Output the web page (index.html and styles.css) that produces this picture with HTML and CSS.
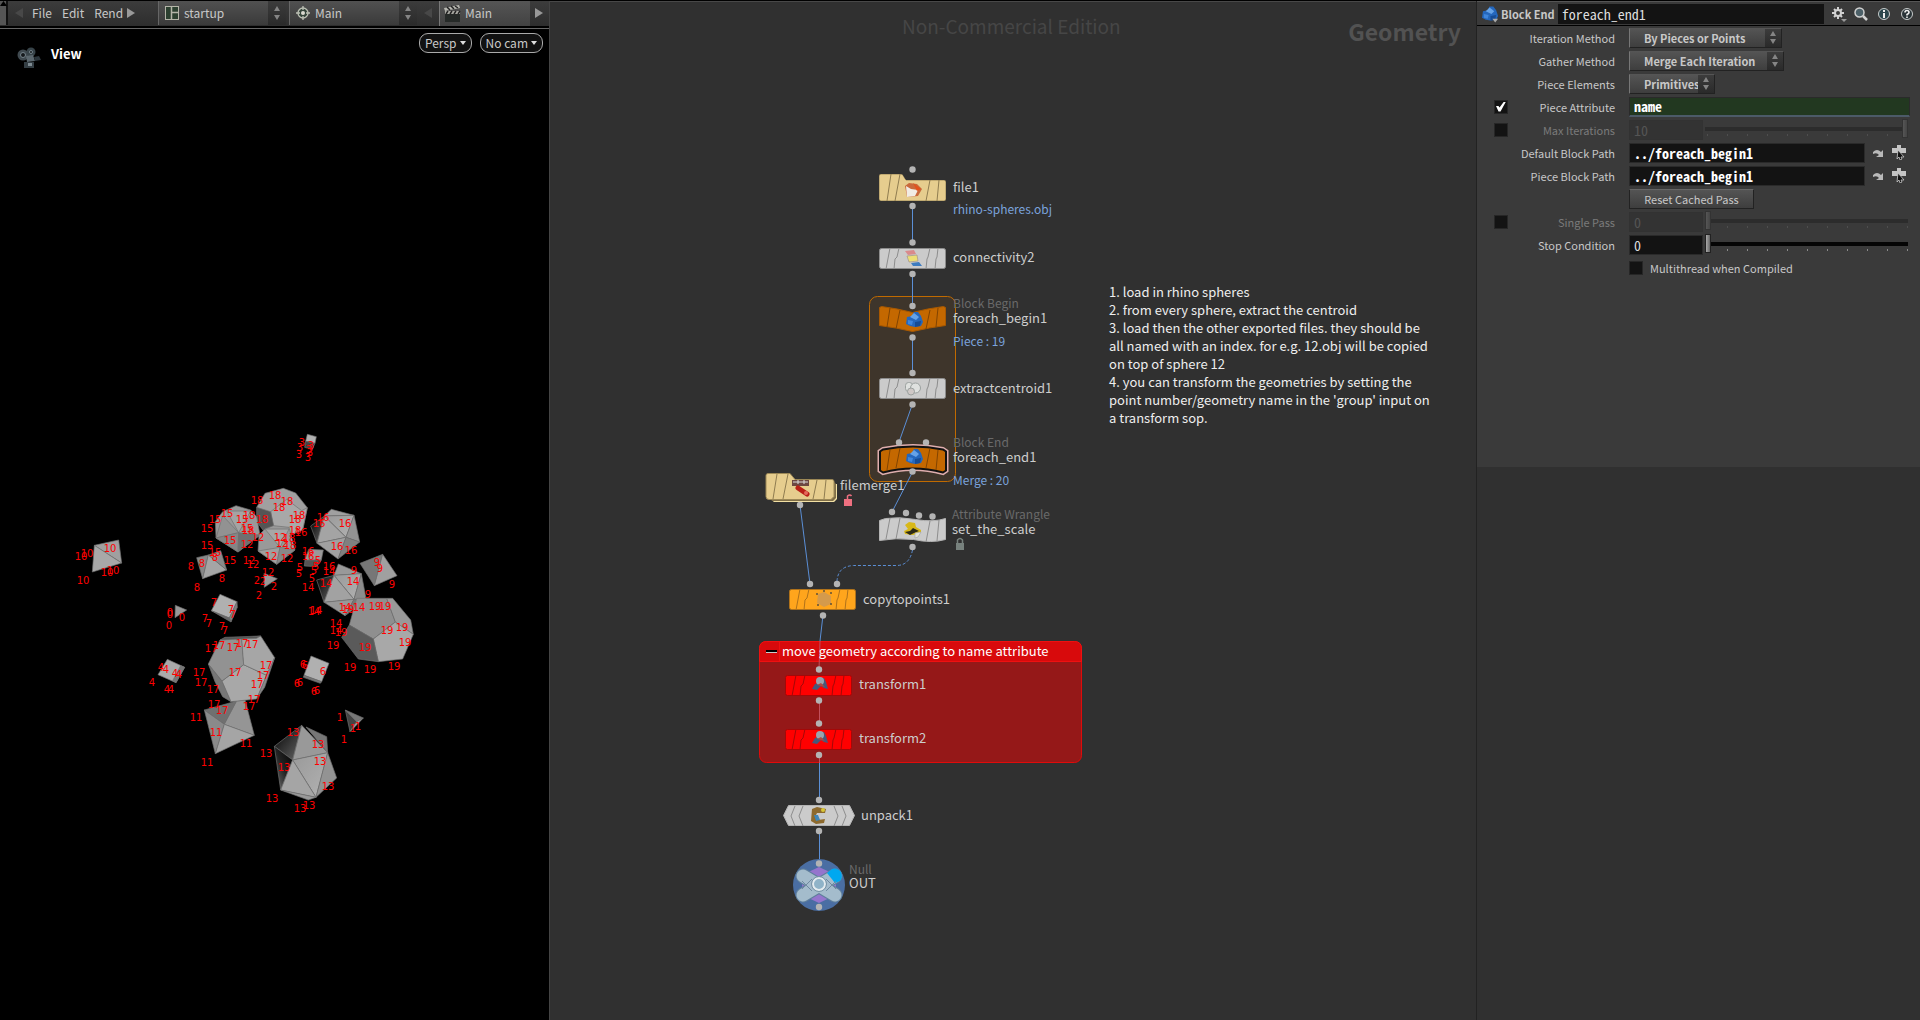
FILE: index.html
```html
<!DOCTYPE html>
<html lang="en">
<head>
<meta charset="utf-8">
<title>Houdini - foreach_end1</title>
<link rel="stylesheet" href="styles.css">
</head>
<body>
<main class="desktop">
  <section class="viewer">
    <header class="menubar">
      <span class="grip"><svg width="7" height="5" viewBox="0 0 7 5"><path d="M0 5 3.5 0 7 5Z" fill="#000"/></svg></span>
      <svg class="arrow dim" width="8" height="10" viewBox="0 0 8 10"><path d="M8 0v10L0 5Z"/></svg>
      <nav class="menus"><a href="#file">File</a><a href="#edit">Edit</a><a href="#render">Render</a></nav>
      <svg class="arrow" width="8" height="10" viewBox="0 0 8 10"><path d="M0 0v10l8-5Z"/></svg>
      <button class="combo first">
        <svg width="14" height="14" viewBox="0 0 14 14"><rect x=".5" y=".5" width="13" height="13" fill="#2c4030" stroke="#b4b4a8"/><path d="M6.5 1v12M7 6.500h6" stroke="#b4b4a8" stroke-width="1.500"/></svg>
        <span>startup</span><i class="stepper"></i>
      </button>
      <button class="combo">
        <svg width="14" height="14" viewBox="0 0 14 14"><circle cx="7" cy="7" r="5" fill="#34443a" stroke="#bcc0b4" stroke-width="1.300"/><circle cx="7" cy="7" r="2" fill="#dadad0"/><path d="M7 0v4M7 10v4M0 7h4M10 7h4" stroke="#bcc0b4" stroke-width="1.300"/></svg>
        <span>Main</span><i class="stepper"></i>
      </button>
      <svg class="arrow dim mid" width="8" height="10" viewBox="0 0 8 10"><path d="M8 0v10L0 5Z"/></svg>
      <button class="shelf">
        <svg width="17" height="17" viewBox="0 0 17 17"><path d="M1 8h15v9H1Z" fill="#262a28"/><path d="M0 3 15 0l1 3L1 6Z" fill="#b6b6b0"/><path d="M1 6h15v3H1Z" fill="#a8a8a2"/><path d="m3 2 3 3M7 1l3 3M11 1l3 2M4 6 2 9M8 6 6 9M12 6l-2 3M16 6l-2 3" stroke="#222" stroke-width="1.500"/></svg>
        <span>Main</span>
      </button>
      <svg class="arrow last" width="8" height="10" viewBox="0 0 8 10"><path d="M0 0v10l8-5Z"/></svg>
    </header>
    <div class="viewport">
      <div class="viewbar">
        <svg width="24" height="22" viewBox="0 0 24 22"><circle cx="6" cy="8" r="5.500" fill="#404a50"/><circle cx="6" cy="8" r="2.500" fill="#15191c" stroke="#74828a"/><circle cx="14" cy="5" r="4.500" fill="#38444a"/><circle cx="14" cy="5" r="1.500" fill="#101416" stroke="#74828a"/><path d="M9 9 16 8l2 6-8 1Z" fill="#5b676e"/><path d="m17 10 5-1 2 4-6 1Z" fill="#2c363c"/><path d="M7 15h10v6H7Z" fill="#343e44"/><path d="M11 16h4v3h-4Z" fill="#7d8a91"/></svg>
        <h2>View</h2>
        <button class="pill">Persp<svg width="6" height="4" viewBox="0 0 6 4"><path d="M0 0h6L3 4Z" fill="#ddd"/></svg></button>
        <button class="pill">No cam<svg width="6" height="4" viewBox="0 0 6 4"><path d="M0 0h6L3 4Z" fill="#ddd"/></svg></button>
      </div>
      <svg class="scene" id="scene" aria-label="3D viewport">
        <defs>
          <linearGradient id="shade" x1="0" y1="0" x2="1" y2="1"><stop offset="0" stop-color="#000"/><stop offset="1" stop-color="#666"/></linearGradient>
          <linearGradient id="shade2" x1="1" y1="0" x2="0" y2="1"><stop offset="0" stop-color="#000"/><stop offset=".5" stop-color="#222"/><stop offset="1" stop-color="#777"/></linearGradient>
          <linearGradient id="lit" x1="0" y1="0" x2="1" y2="1"><stop offset="0" stop-color="#999"/><stop offset="1" stop-color="#b2b2b2"/></linearGradient>
        </defs>
      </svg>
    </div>
  </section>

  <section class="network">
    <svg class="graph" aria-label="Network graph">
      <defs>
        <clipPath id="cFile"><path d="M881 174h20q2 0 3 3l2 3h38q2 0 2 2v17q0 2-2 2h-63q-2 0-2-2v-23q0-2 2-2Z"/></clipPath>
        <g id="stripes"><path d="m11 0-4 21M20 0l-2 9-2 2-1 10M51 0l-2 9-1 2-1 10M59 0l-1 9-1 2-1 10" fill="none" stroke-width="1"/></g>
        <g id="bar"><rect x=".5" y=".5" width="66" height="20" rx="2"/><use href="#stripes"/></g>
        <circle id="dot" r="3.200"/>
        <g id="blob"><path d="m-8 4 1-7 5-1 2-4 4 0 3 4 2 6-2 4-6 1-5-1Z" fill="#2467bd"/><path d="m-4-3 4-4 5 4-3 3Z" fill="#66a3e8"/><path d="m-6 0 5 1-1 4-4-1Z" fill="#3f86dc"/><path d="m1 2 6-1-1 5-5 1Z" fill="#174c94"/></g>
        <g id="xform"><path d="m-8 5 3-5 3-1 2-5 4 0 2 4 2 7-4-1-3-2-4 4Z" fill="#46587a"/><circle cx="0" cy="-3" r="4" fill="#9aa3ad"/><path d="m-3 1 4-2 4 4-4-1Z" fill="#b1473f"/></g>
      </defs>
      <g transform="translate(-550 0)">
        <rect class="loop" x="869.500" y="296.500" width="86" height="185" rx="8"/>
        <rect class="netbox" x="759.500" y="641.500" width="322" height="121" rx="7"/>
        <path class="netbar" d="M759.500 661.500v-13q0-7 7-7h308q7 0 7 7v13Z"/>
        <path d="M779.500 642v19" stroke="#f01010"/><path d="M766 651h11" stroke="#000" stroke-width="2"/><path d="M766 652.500h11" stroke="#ccc"/>
        <path class="wire" d="M912.500 206v36M912.500 274v32M912.500 338v35M912.500 404 899 442M912.500 472 892 512M800 505l10 79M823 615l-3 26M819.500 762v38M819.500 831v32"/>
        <path class="wire redwire" d="m820 641-1 28M819.500 701v22M819.500 755v8"/>
        <path class="wire dashed" d="M912.500 550q-3 15.500-16 15.500H854Q838 566 837 581"/>

        <g class="folder" clip-path="url(#cFile)"><path d="M881 174h20q2 0 3 3l2 3h38q2 0 2 2v17q0 2-2 2h-63q-2 0-2-2v-23q0-2 2-2Z"/><path class="ln" d="m891 174-4 27M900 174l-5 27M930 180l-4 21M939 180l-2 21"/></g>
        <path d="m905 186 4-3 8 1 5 5-4 7-11 1Z" fill="#c96a3c"/><path d="m906 186 5 3 7 1-3 6-8 1Z" fill="#f1ece4"/><path d="m913 183 8 6-4 2Z" fill="#e4521c"/>
        <use class="plain" href="#bar" x="879" y="248"/>
        <path d="m905 251 9-1 2 4-8 1Z" fill="#d98a8c"/><path d="m907 256 10-1 1 6-9 1Z" fill="#ecdf76" stroke="#988" stroke-width=".6"/><path d="m911 263 8-1 3 4-9 0Z" fill="#3d7cc0"/>

        <path class="orange" d="m879.500 307.500 2-1q16 2 31 6 15-4 31-6l2 1v18q-16 2-33 6-17-4-33-6Z"/><path class="oln" d="m890 308-3 19M900 310l-4 19M930 310l-4 19M938 308l-2 19"/>
        <use href="#blob" x="914" y="320"/>
        <use class="plain" href="#bar" x="879" y="378"/>
        <g fill="#dfe1df" stroke="#9ba19f"><rect x="905.500" y="382.500" width="7" height="9" rx="3"/><circle cx="915.500" cy="388" r="5"/><circle cx="911" cy="391.500" r="3.500" fill="#cfc8c6"/></g>
        <path d="m880 451.500 3-2q30-6 60 0l3 2v19l-3 2q-30-8-60 0l-3-2Z" fill="none" stroke="#dfaeae" stroke-width="5"/><path class="orange sel" d="m880 451.500 3-2q30-6 60 0l3 2v19l-3 2q-30-8-60 0l-3-2Z"/><path class="oln" d="m890 450-3 20M900 448l-4 20M930 448l-4 20M938 450l-2 20"/>
        <use href="#blob" x="914" y="457"/>
        <path class="white" d="m879.500 520.500 6-2q14-2 30 1 18 3 30-1v21q-14 4-32 0-18-2-34 1Z"/><path class="wln" d="m890 518-4 21M900 518l-4 21M930 521l-4 21M939 520l-2 21"/>
        <path d="m905 525 4-3 6 1 1 4 5 3 0 2-8 3-8-1-1-3 4-2Z" fill="#d8b818"/><path d="m905 532 5-1 3-3 6 3-5 2-4 2Z" fill="#2d2a17"/><path d="m915 533 6-1-3 5-3 1Z" fill="#e4e4da" stroke="#999" stroke-width=".5"/>

        <path d="M769 477h22l6 7h40v15l-3 3h-60l-5-4Z" fill="#f2e0a4"/>
        <path d="M769 475h22l5 7h38l2 2v14l-3 3h-61Z" fill="#806f48"/>
        <g class="folder"><path d="M768 473.500h22l5 6h37q2 0 2 2v15l-3 3h-62q-3 0-3-3v-21q0-2 2-2Z"/><path class="ln" d="m777 474-4 25M788 474l-5 25M817 480l-4 19M826 480l-2 19"/></g>
        <path d="M792 480h17v6h-17Z" fill="#6d4742"/><path d="M793 482h15M798 480v4M804 480v4" stroke="#ddd" stroke-width="1"/><path d="m798 488 9 6" stroke="#b92018" stroke-width="5" stroke-linecap="round"/><circle cx="806" cy="493" r="2" fill="#e56a5c"/>

        <g class="copy"><use href="#bar" x="789" y="589"/></g><path d="m818 594 6-2 7 4v8l-7 3-7-4Z" fill="#d49a4c"/><g fill="#5e5138"><circle cx="817" cy="594" r="1"/><circle cx="831" cy="593" r="1"/><circle cx="831" cy="604" r="1"/><circle cx="818" cy="605" r="1"/><circle cx="824" cy="591" r="1"/></g>
        <g class="red"><use href="#bar" x="785" y="675"/><use href="#bar" x="785" y="729"/></g>
        <use href="#xform" x="820" y="684"/><use href="#xform" x="820" y="738"/>
        <path class="white" d="M788.500 805.500h61l5 10-5 10h-61l-5-10Z"/><path class="wln" d="M795 806l-4 10 4 10M803 806l-4 10 4 10M834 806l4 10-4 10M842 806l4 10-4 10"/>
        <path d="m812 809 5-2 9 2-1 4-8 0-2 4 3 3 7-1-1 4-8 1-5-3Z" fill="#8d6a2e"/><path d="m814 815 4 0 2 5-4 1Z" fill="#3f86b8"/><circle cx="823" cy="810" r="2" fill="#d8c838"/>
        <circle cx="819" cy="885" r="26" fill="#4a6ea3"/>
        <path d="m802 875 17-8 17 8v20l-17 8-17-8Z" fill="#9575cd"/>
        <g stroke-linecap="round" stroke="#5f7f9c" stroke-width="15"><path d="m803 876 32 19M835 876l-32 19"/></g>
        <g stroke-linecap="round" stroke="#a4bccc" stroke-width="13"><path d="m803 876 32 19M835 876l-32 19"/></g>
        <path d="m827 873 5-4q5-2 9 3 2 6-1 9l-5 2Z" fill="#00a8f0"/>
        <path d="m802 889 10-10M836 889l-10-10M802 881l10 10M836 881l-10 10" stroke="#6f8aa0"/>
        <circle cx="819" cy="884" r="6" fill="#8fb3c8" stroke="#e3ebef" stroke-width="2"/><circle cx="819" cy="884" r="7.500" fill="none" stroke="#7893a6"/>

        <g class="dots">
          <use href="#dot" x="912.500" y="169.500"/><use href="#dot" x="912.500" y="206"/><use href="#dot" x="912.500" y="242.500"/><use href="#dot" x="912.500" y="274"/><use href="#dot" x="912.500" y="306"/><use href="#dot" x="912.500" y="337.500"/><use href="#dot" x="912.500" y="373"/><use href="#dot" x="912.500" y="404.500"/><use href="#dot" x="899" y="442.500"/><use href="#dot" x="926" y="442.500"/><use href="#dot" x="912.500" y="471.500"/><use href="#dot" x="892" y="512"/><use href="#dot" x="906" y="513"/><use href="#dot" x="919" y="515.500"/><use href="#dot" x="932.500" y="516.500"/><use href="#dot" x="912.500" y="547"/><use href="#dot" x="800" y="505"/><use href="#dot" x="810" y="584"/><use href="#dot" x="837" y="584"/><use href="#dot" x="823" y="615.500"/><use href="#dot" x="819" y="669.500"/><use href="#dot" x="819" y="700.500"/><use href="#dot" x="819" y="723.500"/><use href="#dot" x="819" y="755"/><use href="#dot" x="819" y="800"/><use href="#dot" x="819" y="831"/><use href="#dot" x="819" y="863.500"/><use href="#dot" x="819" y="907"/>
        </g>
        <g fill="#77817d"><rect x="956" y="543" width="8" height="7"/><path d="M957.500 543v-3q2.500-3 5 0v3" fill="none" stroke="#77817d" stroke-width="1.500"/></g>
        <g fill="#ee7080"><rect x="844" y="499" width="8" height="7"/><path d="M847.500 499v-3q2.500-2 4 0" fill="none" stroke="#ee7080" stroke-width="1.500"/></g>

        <g class="name">
          <text x="953" y="192">file1</text><text x="953" y="262">connectivity2</text><text x="953" y="323">foreach_begin1</text><text x="953" y="393">extractcentroid1</text><text x="953" y="462">foreach_end1</text><text x="952" y="534">set_the_scale</text><text x="840" y="490">filemerge1</text><text x="863" y="604">copytopoints1</text><text x="859" y="689">transform1</text><text x="859" y="743">transform2</text><text x="861" y="820">unpack1</text><text x="849" y="888">OUT</text>
          <text class="boxtitle" x="782" y="656">move geometry according to name attribute</text>
        </g>
        <g class="kind"><text x="953" y="308">Block Begin</text><text x="953" y="447">Block End</text><text x="952" y="519">Attribute Wrangle</text><text x="849" y="874">Null</text></g>
        <g class="info"><text x="953" y="214">rhino-spheres.obj</text><text x="953" y="346">Piece : 19</text><text x="953" y="485">Merge : 20</text></g>
      </g>
    </svg>
    <p class="edition">Non-Commercial Edition</p>
    <h1 class="context">Geometry</h1>
    <div class="sticky">
      <p>1. load in rhino spheres</p>
      <p>2. from every sphere, extract the centroid</p>
      <p>3. load then the other exported files. they should be<br>all named with an index. for e.g. 12.obj will be copied<br>on top of sphere 12</p>
      <p>4. you can transform the geometries by setting the<br>point number/geometry name in the 'group' input on<br>a transform sop.</p>
    </div>
  </section>

  <aside class="side">
    <form class="params">
      <header class="phead">
        <svg width="17" height="18" viewBox="-9 -9 18 18"><use href="#blob" x="-1"/><path d="M2 5h6L5 9Z" fill="#aaa"/></svg>
        <label for="nodename">Block End</label>
        <input id="nodename" class="mono" value="foreach_end1">
        <button type="button" aria-label="Gear menu"><svg width="16" height="16" viewBox="0 0 16 16"><g stroke="#d2d2d2" stroke-width="2"><path d="M7 1v12M1 7h12M3 3l8 8M11 3l-8 8"/></g><circle cx="7" cy="7" r="3" fill="#3a3a3a" stroke="#d2d2d2" stroke-width="2"/><path d="M10 13h6l-3 3Z" fill="#999"/></svg></button>
        <button type="button" aria-label="Search"><svg width="14" height="14" viewBox="0 0 14 14"><path d="m9 9 4 4" stroke="#d2d2d2" stroke-width="2.500"/><circle cx="5.500" cy="5.500" r="4.500" fill="#4c6068" stroke="#d2d2d2" stroke-width="1.500"/></svg></button>
        <button type="button" aria-label="Info"><svg width="14" height="14" viewBox="0 0 14 14"><circle cx="7" cy="7" r="5.500" fill="#2c464c" stroke="#c8cccc"/><path d="M7 6v5M7 3v2" stroke="#eee" stroke-width="2"/></svg></button>
        <button type="button" aria-label="Help"><svg width="14" height="14" viewBox="0 0 14 14"><circle cx="7" cy="7" r="5.500" fill="#2a3438" stroke="#c8cccc"/><path d="M5 5.500q0-2 2-2t2 2q0 1-2 2v1M7 9.500v1.500" fill="none" stroke="#eee" stroke-width="1.600"/></svg></button>
      </header>
      <div class="rows">
        <div class="row"><label for="p1">Iteration Method</label><div class="field"><span class="select w1"><select id="p1"><option>By Pieces or Points</option></select><i class="stepper"></i></span></div></div>
        <div class="row"><label for="p2">Gather Method</label><div class="field"><span class="select w2"><select id="p2"><option>Merge Each Iteration</option></select><i class="stepper"></i></span></div></div>
        <div class="row"><label for="p3">Piece Elements</label><div class="field"><span class="select w3"><select id="p3"><option>Primitives</option></select><i class="stepper"></i></span></div></div>
        <div class="row"><input type="checkbox" checked aria-label="Use Piece Attribute"><label for="p4">Piece Attribute</label><div class="field"><input id="p4" class="mono bold attr" value="name"></div></div>
        <div class="row off"><input type="checkbox" aria-label="Use Max Iterations"><label for="p5">Max Iterations</label><div class="field"><input id="p5" class="mono num" value="10" disabled><span class="range"><input type="range" min="0" max="10" value="10" disabled aria-label="Max Iterations slider"></span></div></div>
        <div class="row"><label for="p6">Default Block Path</label><div class="field"><input id="p6" class="mono bold path" value="../foreach_begin1"><button type="button" aria-label="Jump to operator"><svg width="12" height="10" viewBox="0 0 12 10"><path d="M1 4q4-4 8 0l2-2v7H4l3-2Q5 4 1 6Z" fill="#b9b9b9"/></svg></button><button type="button" aria-label="Choose operator"><svg width="14" height="15" viewBox="0 0 14 15"><path d="M0 3h5V0h4v3h5v5H0Z" fill="#c4c4c4"/><path d="m6 5 6 7-3 0 1 2-2 1-1-3-2 2Z" fill="#111" stroke="#ccc" stroke-width=".8"/></svg></button></div></div>
        <div class="row"><label for="p7">Piece Block Path</label><div class="field"><input id="p7" class="mono bold path" value="../foreach_begin1"><button type="button" aria-label="Jump to operator"><svg width="12" height="10" viewBox="0 0 12 10"><path d="M1 4q4-4 8 0l2-2v7H4l3-2Q5 4 1 6Z" fill="#b9b9b9"/></svg></button><button type="button" aria-label="Choose operator"><svg width="14" height="15" viewBox="0 0 14 15"><path d="M0 3h5V0h4v3h5v5H0Z" fill="#c4c4c4"/><path d="m6 5 6 7-3 0 1 2-2 1-1-3-2 2Z" fill="#111" stroke="#ccc" stroke-width=".8"/></svg></button></div></div>
        <div class="row"><div class="field"><button type="button" class="reset">Reset Cached Pass</button></div></div>
        <div class="row off"><input type="checkbox" aria-label="Use Single Pass"><label for="p8">Single Pass</label><div class="field"><input id="p8" class="mono num" value="0" disabled><span class="range"><input type="range" min="0" max="10" value="0" disabled aria-label="Single Pass slider"></span></div></div>
        <div class="row"><label for="p9">Stop Condition</label><div class="field"><input id="p9" class="mono num" value="0"><span class="range"><input type="range" min="0" max="10" value="0" aria-label="Stop Condition slider"></span></div></div>
        <div class="row"><div class="field"><input type="checkbox" id="mt"><label for="mt">Multithread when Compiled</label></div></div>
      </div>
    </form>
  </aside>
</main>
<script src="scene.js"></script>
</body>
</html>
```
FILE: styles.css
```css
* { box-sizing: border-box; }
body {
  margin: 0;
  background: #303030;
  color: #c8c8c8;
  font: 11px/20px "Noto Sans CJK SC", "Noto Sans", sans-serif;
}
h1, h2, p { margin: 0; }
svg { display: block; flex: none; }
button, input, select { font: inherit; color: inherit; margin: 0; padding: 0; border: 0; background: none; border-radius: 0; }
a { color: inherit; text-decoration: none; }

.desktop { display: grid; grid-template-columns: 550fr 926fr 444fr; min-height: 100vh; border-top: 1px solid #000; }

/* viewer */
.viewer { display: flex; flex-direction: column; min-width: 0; background: #000; border-right: 1px solid #444; }
.menubar {
  display: flex; align-items: center; height: 28px; padding-bottom: 3px;
  border-bottom: 1px solid #666; font-size: 12px; overflow: hidden;
  background: linear-gradient(#3c3c3c, #2c2c2c);
  box-shadow: inset 0 -2px #000;
}
.menubar > * { flex: none; }
.grip { align-self: stretch; width: 8px; border-right: 2px solid #111; background: #555; }
.arrow { fill: #999; margin-left: 7px; }
.arrow.dim { fill: #484848; }
.menus { display: flex; gap: 10px; width: 100px; padding-left: 9px; overflow: hidden; margin-right: -3px; }
.combo { display: flex; align-items: center; gap: 5px; width: 128px; height: 24px; padding-left: 6px; background: linear-gradient(#515151, #3a3a3a); border-left: 1px solid #666; text-align: left; margin-left: 3px; }
.combo.first { margin-left: 23px; }
.combo span { flex: 1; }
.stepper { width: 18px; align-self: stretch; display: flex; flex-direction: column; justify-content: center; align-items: center; gap: 4px; background: linear-gradient(#3c3c3c, #2a2a2a); }
.stepper::before, .stepper::after { content: ""; border: 3px solid transparent; border-top: 0; border-bottom: 5px solid #858585; }
.stepper::after { border-bottom: 0; border-top: 5px solid #858585; }
.shelf { display: flex; align-items: center; gap: 4px; width: 91px; height: 25px; padding-left: 4px; margin-left: 7px; background: linear-gradient(#555, #424242); border-left: 1px solid #777; }
.arrow.last { margin-left: 5px; }
.viewport { flex: 1; display: flex; flex-direction: column; position: relative; }
.viewbar { display: flex; gap: 8px; padding: 4px 6px 0 17px; align-items: flex-start; }
.viewbar > svg { margin-top: 14px; }
.viewbar h2 { flex: 1; font-size: 13px; line-height: 20px; color: #fff; padding: 11px 0 0 2px; }
.pill { display: flex; align-items: center; justify-content: center; gap: 3px; height: 20px; padding: 0 5px; border: 1px solid #aaa; border-radius: 9px; background: #111; font-size: 12px; }
.scene { position: absolute; inset: -29px 0 0 0; width: 100%; height: calc(100% + 29px); pointer-events: none; }
.scene text { fill: #f00; font: 10px "DejaVu Sans", sans-serif; text-anchor: middle; }

/* network editor */
.network { position: relative; border-top: 1px solid #484848; overflow: hidden; }
.graph { position: absolute; inset: -2px 0 0 0; width: 100%; height: calc(100% + 2px); }
.edition, .context { position: absolute; white-space: nowrap; }
.edition { top: 7px; left: 352px; font-size: 19px; line-height: 34px; color: #464646; }
.context { top: 12px; right: 15px; font-size: 23px; line-height: 34px; color: #525252; }
.sticky { position: absolute; top: 281px; left: 559px; width: 330px; color: #eee; font-size: 13px; line-height: 18px; }

.loop { fill: #3e352b; stroke: #c06a00; }
.netbox { fill: #951818; stroke: #e00a0a; }
.netbar { fill: #d80a0c; stroke: #f01010; }
.wire { fill: none; stroke: #5b8fd6; }
.redwire { stroke: #c0505c; }
.dashed { stroke-dasharray: 3 2; }
.folder { fill: #e6cd8e; stroke: #9c8856; }
.folder .ln { fill: none; stroke: #8f7c50; }
.plain { fill: #cbcbcb; stroke: #8d8d8d; }
.white { fill: #cbcbcb; stroke: #b4b4b4; }
.wln { fill: none; stroke: #8d8d8d; }
.orange { fill: #c46800; stroke: #a85800; }
.orange.sel { stroke: #111; stroke-width: 2; }
.oln { fill: none; stroke: #824400; }
.copy { fill: #ffa51c; stroke: #b0721a; }
.red { fill: #f00; stroke: #a40808; }
.dots { fill: #b4b4b4; }
.name { fill: #cdcdcd; font-size: 13px; }
.name .boxtitle { fill: #fff; }
.kind { fill: #6a6a6a; font-size: 12px; }
.info { fill: #7ba3dc; font-size: 12px; }

/* parameter pane */
.side { min-width: 0; border-left: 1px solid #222; }
.params { min-height: 466px; background: #3a3a3a; border-top: 1px solid #555; }
.phead { display: flex; align-items: center; height: 24px; padding: 0 4px 0 5px; border-bottom: 1px solid #000; }
.phead label { font-weight: bold; margin: 0 3px 0 2px; white-space: nowrap; }
.phead input { flex: 1; min-width: 0; height: 20px; padding: 0 4px; background: #131313; }
.phead button { width: 16px; margin-left: 7px; }
.phead button:first-of-type { margin-left: 7px; }
.mono { font-family: "Noto Sans Mono CJK SC", "DejaVu Sans Mono", monospace; font-size: 14px; color: #ddd; }
.bold { font-weight: bold; color: #fff; }

.rows { padding: 0 10px 0 17px; }
.row { display: grid; grid-template-columns: 14px 107px 1fr; height: 23px; align-items: center; }
.row > label { grid-column: 2; text-align: right; white-space: nowrap; }
.field { grid-column: 3; display: flex; align-items: center; padding-left: 14px; min-width: 0; }
.off { color: #7a7a7a; }
.select { display: flex; height: 20px; background: linear-gradient(#545454, #3e3e3e); border: 1px solid #222; border-left-color: #777; border-top-color: #555; }
.select select { appearance: none; flex: 1; min-width: 0; padding-left: 14px; font-weight: bold; line-height: 16px; }
.select .stepper { width: 16px; gap: 3px; }
.w1 { width: 153px; }
.w2 { width: 155px; }
.w3 { width: 86px; }
.field .mono { height: 20px; padding: 0 4px; background: #131313; border: 1px solid #2a2a2a; line-height: 18px; }
.field .attr { flex: 1; min-width: 0; background: #223820; border-bottom: 2px solid #4c5a68; }
.field .path { flex: 1; min-width: 0; }
.field .path + button { margin: 0 8px 0 7px; }
.field > button:last-child { margin-right: 4px; }
.field .num { width: 74px; }
.off .mono.num { background: #333; border-color: #323232; color: #555; }
.field .reset { width: 125px; height: 20px; background: linear-gradient(#545454, #3e3e3e); border: 1px solid #222; border-top-color: #666; line-height: 18px; }

input[type="checkbox"] { appearance: none; width: 14px; height: 14px; background: #131313; border: 1px solid #262626; flex: none; }
input[type="checkbox"]:checked { position: relative; }
input[type="checkbox"]:checked::after { content: ""; position: absolute; inset: 1px; background: #fff; clip-path: polygon(0 45%, 25% 45%, 35% 60%, 80% 0, 100% 0, 45% 100%, 25% 100%); }
.field label { margin-left: 7px; }

.range { flex: 1; height: 20px; margin: 0 2px; display: flex; background: repeating-linear-gradient(90deg, #8a8a8a 0 1px, transparent 1px 20px) 2px 14px / 100% 2px no-repeat; }
.range input { appearance: none; width: 100%; height: 18px; background: linear-gradient(#050505 0 0) center / 100% 4px no-repeat; }
.range input::-webkit-slider-thumb { appearance: none; width: 6px; height: 19px; background: linear-gradient(90deg, #aaa, #666); border: 1px solid #222; }
.off .range { opacity: .25; }
```
FILE: scene.js
```js
// Meshes and primitive labels of the viewport, in third-of-a-pixel scene units.
const NS = 'http://www.w3.org/2000/svg';
const root = document.getElementById('scene');

function add(parent, tag, attrs, text) {
  const el = document.createElementNS(NS, tag);
  for (const k in attrs) el.setAttribute(k, attrs[k]);
  if (text) el.textContent = text;
  parent.appendChild(el);
  return el;
}

const groups = [
  {
    x: 60, y: 420,
    faces: [
      ['742,43 769,50 765,70 737,64', '#b0b0b0'], ['737,64 765,70 757,88 734,82', '#444'],
      ['103,376 176,360 185,429', '#a0a0a0'], ['103,376 185,429 97,456', '#a8a8a8'],
      ['590,262 615,220 670,205 707,219 742,263 728,330 690,345 640,320', '#a0a0a0'],
      ['632,275 680,238 725,272 742,263 728,330 690,345 640,320', '#a8a8a8'],
      ['590,262 632,275 642,322 615,338 590,305', '#555'],
      ['488,275 528,257 572,270 590,290 600,345 534,396 468,354 466,305', '#999'],
      ['488,287 536,338 468,354', '#929292'], ['500,273 572,273 536,338', '#a4a4a4'],
      ['468,354 536,338 534,396', '#858585'], ['536,338 600,345 534,396', '#707070'],
      ['597,345 615,327 640,317 687,322 705,390 650,433 594,393', '#999'],
      ['615,327 687,327 660,382', '#a6a6a6'], ['594,393 660,382 650,433', '#a0a0a0'], ['660,382 705,390 650,433', '#888'],
      ['752,318 793,288 771,370', 'url(#shade)'],
      ['793,288 814,268 882,286', '#a0a0a0'], ['793,288 882,286 858,352', 'url(#lit)'], ['793,288 858,352 771,370', '#a4a4a4'],
      ['882,286 899,366 858,352', '#939393'], ['771,370 858,352 834,417', '#a0a0a0'], ['858,352 899,366 834,417', '#808080'],
      ['410,413 445,405 428,476', '#888'], ['445,405 500,450 428,476', '#a5a5a5'], ['445,405 482,392 500,450', '#8a8a8a'],
      ['746,388 790,390 784,420 735,420', '#999'], ['735,420 784,420 770,440 733,438', '#555'],
      ['612,460 652,476 613,502', '#999'], ['346,556 380,570 345,593', '#999'],
      ['480,523 531,545 508,594 454,572', '#b0b0b0'], ['531,545 532,562 513,606 508,594', '#808080'], ['454,572 508,594 513,606', '#666'],
      ['770,480 822,466 792,547', 'url(#shade)'],
      ['822,466 835,432 904,461', '#999'], ['822,466 904,461 882,538', 'url(#lit)'], ['822,466 882,538 792,547', '#a2a2a2'],
      ['904,461 919,540 882,538', '#8c8c8c'], ['792,547 882,538 855,587', '#989898'], ['882,538 919,540 855,587', '#777'],
      ['900,430 968,403 943,497', '#777'], ['968,403 1011,467 943,497', '#a0a0a0']
    ],
    labels: {
      3: '727,66 719,81 716,101 754,74 748,87 751,96 743,112',
      18: '592,239 646,224 682,242 658,260 566,284 607,296 718,284 706,296 706,329 688,355 690,374 565,330',
      15: '502,278 466,296 546,296 442,323 561,323 511,359 442,374 466,395 511,419',
      12: '595,350 661,350 562,371 667,368 634,407 682,415 568,419 580,431 625,455',
      16: '790,290 778,308 856,308 832,377 874,389 724,335 745,392 745,409 808,437',
      10: '151,383 80,398 64,407 140,455 160,449 70,479',
      8: '394,437 427,428 466,410 487,473 412,500',
      5: '774,419 721,440 768,438 763,450 718,458 757,473',
      14: '808,452 799,488 880,482 745,500 763,572 769,570 856,560 898,560 829,610 829,629',
      9: '952,425 961,443 883,449 997,491 925,521',
      19: '865,566',
      2: '592,479 610,482 641,497 598,524',
      7: '463,545 514,566 520,581 436,593 448,608 487,617 496,629',
      0: '331,576 331,582 367,590 328,614'
    }
  },
  {
    x: 140, y: 600,
    faces: [
      ['650,-5 740,-5 766,66 700,117 628,75', '#8f8f8f'], ['740,-5 758,-5 812,60 820,103 766,66', '#999'],
      ['700,117 766,66 820,103 788,177 715,185', '#a8a8a8'], ['628,75 700,117 715,185 655,177 605,112', '#5a5a5a'],
      ['82,178 134,202 108,248 54,224', '#aaa'], ['122,197 134,202 108,248 98,242', '#777'],
      ['193,330 290,303 253,373', '#707070'], ['290,303 315,300 343,406 253,373', '#959595'],
      ['193,330 253,373 226,461', '#8a8a8a'], ['253,373 343,406 226,461', '#a5a5a5'],
      ['205,192 246,243 273,305 248,290 225,245', '#777'], ['246,243 311,194 380,226 350,297 273,305', '#a8a8a8'],
      ['240,120 305,115 311,194 246,243 205,192', '#929292'], ['305,115 362,108 404,173 380,226 311,194', '#a6a6a6'],
      ['240,120 255,112 362,108 350,115', '#555'], ['404,173 380,226 350,297 374,262', '#888'],
      ['513,168 567,190 545,245 492,226', '#b0b0b0'], ['492,226 545,245 541,250 490,232', '#777'],
      ['616,330 650,365 630,395', '#444'], ['616,330 670,354 650,365', '#777'], ['650,365 670,354 630,395', '#aaa'],
      ['403,439 485,376 458,480', 'url(#shade)'], ['403,439 458,480 422,570', 'url(#shade2)'],
      ['498,381 560,410 563,458', '#777'],
      ['485,376 563,458 458,480', '#999'], ['458,480 563,458 528,592', 'url(#lit)'], ['458,480 528,592 422,570', '#a5a5a5'],
      ['563,458 590,534 528,592', '#939393'], ['422,570 528,592 505,600', '#999']
    ],
    labels: {
      17: '214,143 238,134 279,140 306,128 337,131 379,194 178,215 285,215 370,224 183,245 352,251 220,266 342,296 223,311 245,329 328,317',
      4: '64,200 79,206 106,218 118,222 37,245 80,266 94,268',
      6: '490,192 496,194 550,212 472,250 480,246 523,274 532,270',
      11: '169,350 228,395 319,428 202,485',
      13: '460,395 379,458 535,431 541,482 433,500 565,557 397,593 481,623 506,614',
      1: '601,350 640,383 655,377 613,416',
      19: '705,17 736,17 742,89 787,80 796,125 676,140 580,134 631,200 690,206 763,197 604,95'
    }
  }
];

for (const g of groups) {
  const mesh = add(root, 'g', { transform: `translate(${g.x} ${g.y}) scale(${1 / 3})`, stroke: '#707070', 'stroke-width': 2, 'stroke-linejoin': 'round' });
  for (const [points, fill] of g.faces) add(mesh, 'polygon', { points, fill });
}
for (const g of groups) {
  for (const id in g.labels) {
    for (const p of g.labels[id].split(' ')) {
      const [x, y] = p.split(',').map(Number);
      add(root, 'text', { x: Math.round(g.x + x / 3), y: Math.round(g.y + y / 3 + 4) }, id);
    }
  }
}
```
